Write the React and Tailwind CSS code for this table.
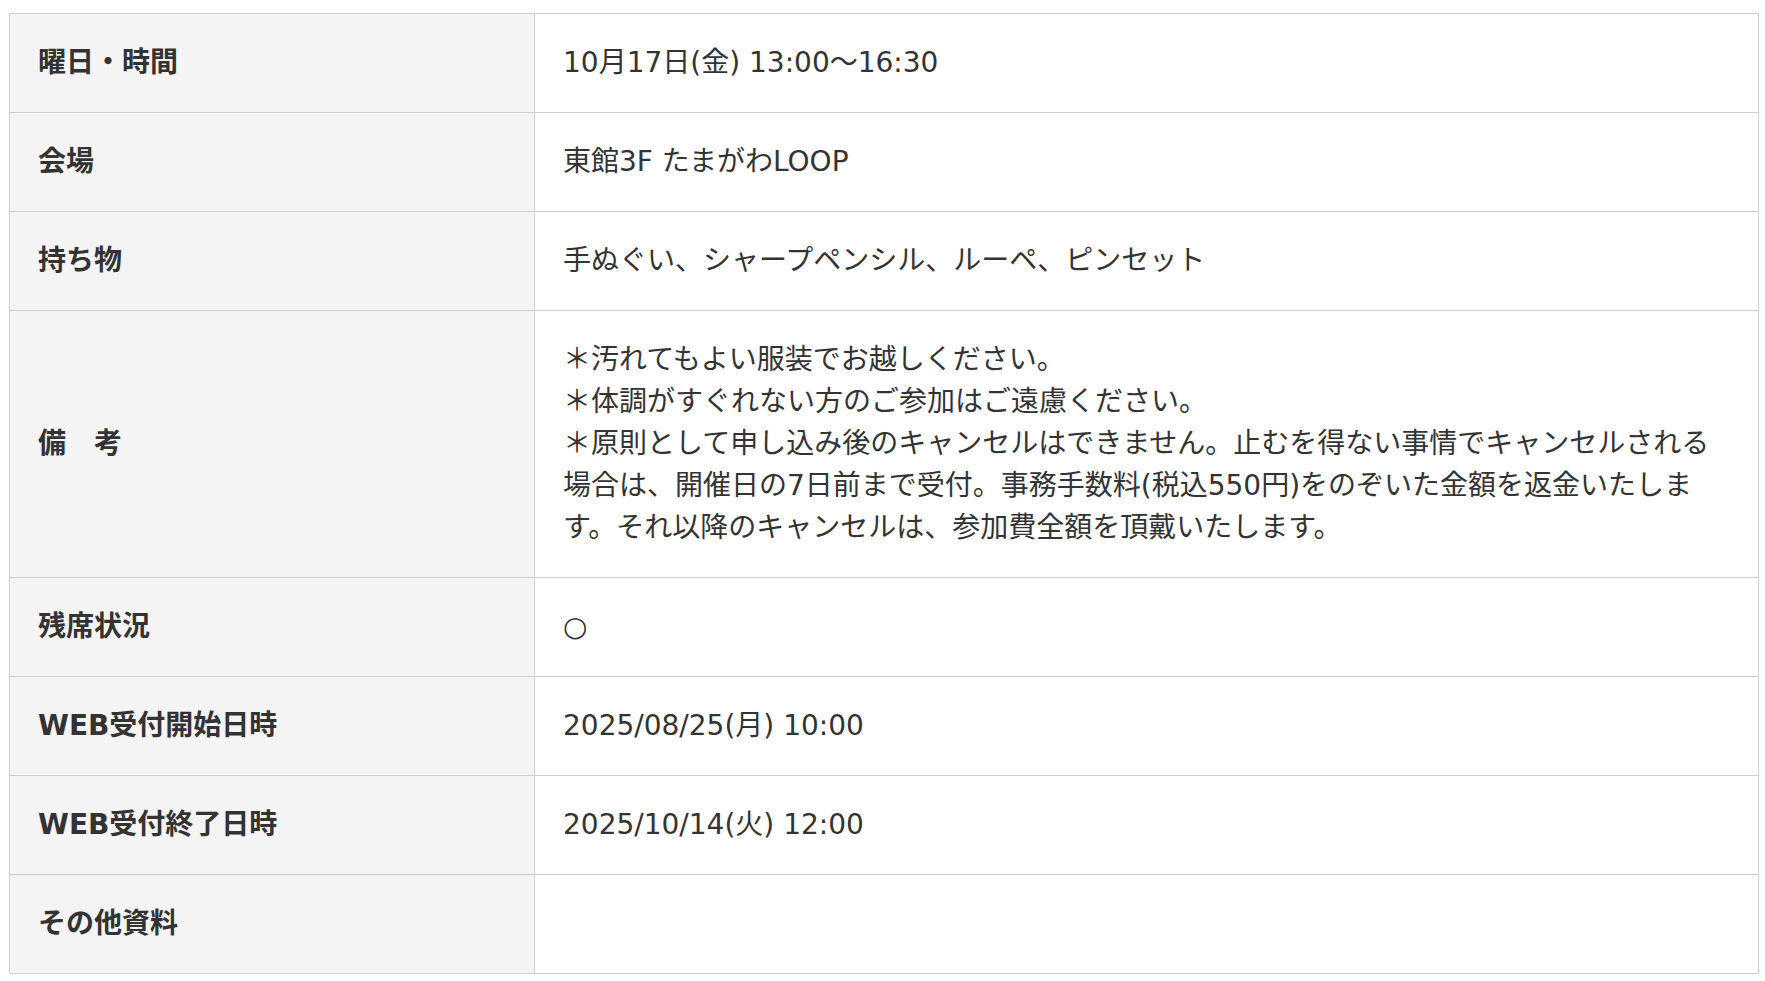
export default function App() {
  const rows = [
    { label: "曜日・時間", value: ["10月17日(金) 13:00～16:30"] },
    { label: "会場", value: ["東館3F たまがわLOOP"] },
    { label: "持ち物", value: ["手ぬぐい、シャープペンシル、ルーペ、ピンセット"] },
    {
      label: "備　考",
      value: [
        "＊汚れてもよい服装でお越しください。",
        "＊体調がすぐれない方のご参加はご遠慮ください。",
        "＊原則として申し込み後のキャンセルはできません。止むを得ない事情でキャンセルされる場合は、開催日の7日前まで受付。事務手数料(税込550円)をのぞいた金額を返金いたします。それ以降のキャンセルは、参加費全額を頂戴いたします。",
      ],
    },
    { label: "残席状況", value: ["○"] },
    { label: "WEB受付開始日時", value: ["2025/08/25(月) 10:00"] },
    { label: "WEB受付終了日時", value: ["2025/10/14(火) 12:00"] },
    { label: "その他資料", value: [""] },
  ];
  return (
    <div
      className="min-h-[981px] bg-white pl-[9px] pt-[13px] text-[#333333]"
      style={{ fontFamily: '"DejaVu Sans", "Noto Sans CJK JP", sans-serif' }}
    >
      <table className="w-[1750px] border-collapse text-[28px] leading-[42px]">
        <tbody>
          {rows.map((r, i) => (
            <tr key={i}>
              <th className="w-[525px] border border-[#cfcfcf] bg-[#f4f4f4] px-[28px] py-[28px] text-left align-middle font-bold">
                {r.label}
              </th>
              <td className="border border-[#cfcfcf] bg-white px-[28px] py-[28px] align-middle font-normal">
                {r.value.map((v, j) => (
                  <div key={j} className="min-h-[42px]">
                    {v}
                  </div>
                ))}
              </td>
            </tr>
          ))}
        </tbody>
      </table>
    </div>
  );
}
